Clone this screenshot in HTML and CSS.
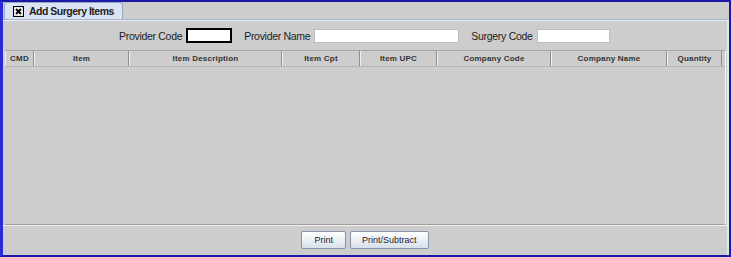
FILE: index.html
```html
<!DOCTYPE html>
<html>
<head>
    <title>Add Surgery Items</title>
    <link rel="stylesheet" href="styles.css">
</head>
<body>
    <div class="window">
        <div class="tabs">
            <div class="tab">
                <span class="close-box">
                    <svg width="11" height="11" viewBox="0 0 11 11">
                        <rect x="0.5" y="0.5" width="10" height="10" fill="#fff" stroke="#000" stroke-width="1.2"/>
                        <path d="M3 3 L8 8 M8 3 L3 8" stroke="#000" stroke-width="2"/>
                    </svg>
                </span>
                Add Surgery Items
            </div>
        </div>
        <div class="panel">
            <div class="filters">
                <label>Provider Code</label>
                <input type="text" class="code focused">
                <label>Provider Name</label>
                <input type="text" class="name">
                <label>Surgery Code</label>
                <input type="text" class="surgery">
            </div>
            <div class="table">
                <div class="head">
                    <div class="col" style="width: 29px">CMD</div>
                    <div class="col" style="width: 95px">Item</div>
                    <div class="col" style="width: 153px">Item Description</div>
                    <div class="col" style="width: 78px">Item Cpt</div>
                    <div class="col" style="width: 77px">Item UPC</div>
                    <div class="col" style="width: 114px">Company Code</div>
                    <div class="col" style="width: 116px">Company Name</div>
                    <div class="col" style="width: 55px">Quantity</div>
                </div>
                <div class="body"></div>
            </div>
            <div class="actions">
                <button>Print</button>
                <button class="wide">Print/Subtract</button>
            </div>
        </div>
    </div>
</body>
</html>
```

FILE: styles.css
```css
body {
    margin: 0;
    font-family: "Liberation Sans", Arial, sans-serif;
}
.window {
    width: 731px;
    height: 257px;
    box-sizing: border-box;
    border: 2px solid #1a1aa6;
    border-left: 3px solid #2a2ad6;
    background-color: #cdcdcd;
    display: flex;
    flex-direction: column;
}
.tabs {
    height: 17px;
    display: flex;
    padding-left: 1px;
    border-bottom: 1px solid #a8b4c8;
}
.tab {
    width: 119px;
    height: 17px;
    box-sizing: border-box;
    background-color: #dae4f5;
    border: 1px solid #9aa6ba;
    border-bottom: none;
    border-radius: 3px 3px 0 0;
    display: flex;
    align-items: center;
    font-size: 10.5px;
    font-weight: bold;
    letter-spacing: -0.5px;
    color: #222;
    padding-left: 8px;
}
.close-box {
    display: flex;
    margin-right: 5px;
}
.panel {
    flex: 1;
    border-top: 1px solid #e6edf9;
    border-right: 2px solid #e2e8f0;
    display: flex;
    flex-direction: column;
}
.filters {
    height: 29px;
    display: flex;
    align-items: center;
    padding-left: 116px;
    font-size: 10.5px;
    color: #222;
    letter-spacing: -0.3px;
}
.filters label {
    margin-right: 4px;
}
.filters input {
    height: 14px;
    box-sizing: border-box;
    border: 1px solid #b8bcc4;
    background-color: #fff;
    margin: 0 12px 0 0;
    padding: 0;
}
.filters input.focused {
    height: 15px;
    border: 2px solid #000;
}
.filters .code { width: 46px; }
.filters .name { width: 145px; }
.filters .surgery { width: 73px; }
.table {
    height: 173px;
    margin: 0 1px 0 2px;
    border-top: 1px solid #a6a6a6;
    border-bottom: 1px solid #9c9c9c;
    border-right: 1px solid #f4f4f4;
    display: flex;
    flex-direction: column;
}
.head {
    height: 15px;
    display: flex;
    border-bottom: 1px solid #b4b4b4;
}
.col {
    box-sizing: border-box;
    border-left: 1px solid #f0f0f0;
    border-right: 1px solid #8e8e8e;
    text-align: center;
    font-size: 8px;
    font-weight: bold;
    letter-spacing: 0.2px;
    line-height: 15px;
    color: #333;
}
.body {
    flex: 1;
}
.actions {
    flex: 1;
    border-top: 1px solid #f2f2f2;
    display: flex;
    justify-content: center;
    align-items: center;
    gap: 4px;
    padding-bottom: 2px;
}
.actions button {
    height: 18px;
    padding: 0 12px;
    border: 1px solid #8894a8;
    border-radius: 2px;
    background: linear-gradient(#ffffff, #d8e0ec);
    font-family: "Liberation Sans", Arial, sans-serif;
    font-size: 9px;
    color: #222;
}
.actions button.wide {
    padding: 0 11px;
}
```
